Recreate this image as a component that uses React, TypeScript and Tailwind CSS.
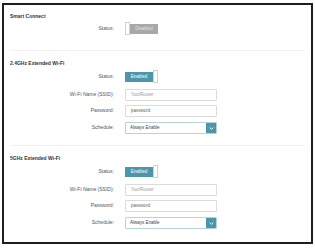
const font = { fontFamily: '"Liberation Sans", Arial, sans-serif' };

function Toggle({ on }: { on: boolean }) {
  if (on) {
    return (
      <div className="flex items-center h-[13px]">
        <div className="w-[28px] h-[10px] pt-[1px] bg-[#4c96a9] text-white text-[4.5px] leading-none flex items-center justify-center">
          Enabled
        </div>
        <div className="w-[5px] h-[13px] border border-[#b9d9e3] bg-white" />
      </div>
    );
  }
  return (
    <div className="flex items-center h-[13px]">
      <div className="w-[5px] h-[13px] border border-[#b9d9e3] bg-white" />
      <div className="w-[28px] h-[10px] pt-[1px] bg-[#a8a8a8] text-[#e2e2e2] text-[4.5px] leading-none flex items-center justify-center">
        Disabled
      </div>
    </div>
  );
}

function Row({ label, children, className }: { label: string; children: React.ReactNode; className?: string }) {
  return (
    <div className={"flex items-center " + (className ?? "")}>
      <div className="w-[110px] text-right text-[5px] text-[#555] pr-[2px]">{label}</div>
      <div className="ml-[9px]">{children}</div>
    </div>
  );
}

function Input({ value, muted }: { value: string; muted?: boolean }) {
  return (
    <div
      className={
        "w-[92px] h-[12px] border border-[#dcdcdc] rounded-[1px] bg-white flex items-center px-[5px] text-[4.5px] leading-none " +
        (muted ? "text-[#999]" : "text-[#666]")
      }
    >
      {value}
    </div>
  );
}

function Select() {
  return (
    <div className="w-[92px] h-[12px] border border-[#b3d3dd] rounded-[1px] bg-white flex items-center">
      <div className="flex-1 px-[4px] text-[4.5px] leading-none text-[#444]">Always Enable</div>
      <div className="w-[10px] h-full bg-[#4c96a9] flex items-center justify-center">
        <svg width="5" height="3" viewBox="0 0 5 3">
          <path d="M0.6 0.5 L2.5 2.3 L4.4 0.5" stroke="white" strokeWidth="0.9" fill="none" />
        </svg>
      </div>
    </div>
  );
}

function WifiSection({ title, last }: { title: string; last?: boolean }) {
  return (
    <div>
      <div className="pt-[8px] pl-[4px] h-[16px] text-[5px] font-bold text-[#333] leading-[8px]">{title}</div>
      <Row label="Status:" className="mt-[3px]">
        <Toggle on />
      </Row>
      <Row label="Wi-Fi Name (SSID):" className="mt-[6px]">
        <Input value="YourRouter" muted />
      </Row>
      <Row label="Password:" className="mt-[4px]">
        <Input value="password" />
      </Row>
      <Row label="Schedule:" className="mt-[5px]">
        <Select />
      </Row>
      {!last && <div className="mt-[11px] mx-[4px] h-px bg-[#f1f1f1]" />}
    </div>
  );
}

export default function App() {
  return (
    <div className="w-[315px] h-[248px] bg-white pt-[3px] pl-[2px]" style={font}>
      <div className="w-[311px] h-[241px] border-2 border-[#1e1e1e] px-[2px] overflow-hidden">
        <div className="pt-[7px] pl-[4px] h-[15px] text-[5px] font-bold text-[#333] leading-[8px]">Smart Connect</div>
        <Row label="Status:" className="mt-[2px]">
          <Toggle on={false} />
        </Row>
        <div className="mt-[15px] mx-[4px] h-px bg-[#f1f1f1]" />
        <WifiSection title="2.4GHz Extended Wi-Fi" />
        <WifiSection title="5GHz Extended Wi-Fi" last />
      </div>
    </div>
  );
}
